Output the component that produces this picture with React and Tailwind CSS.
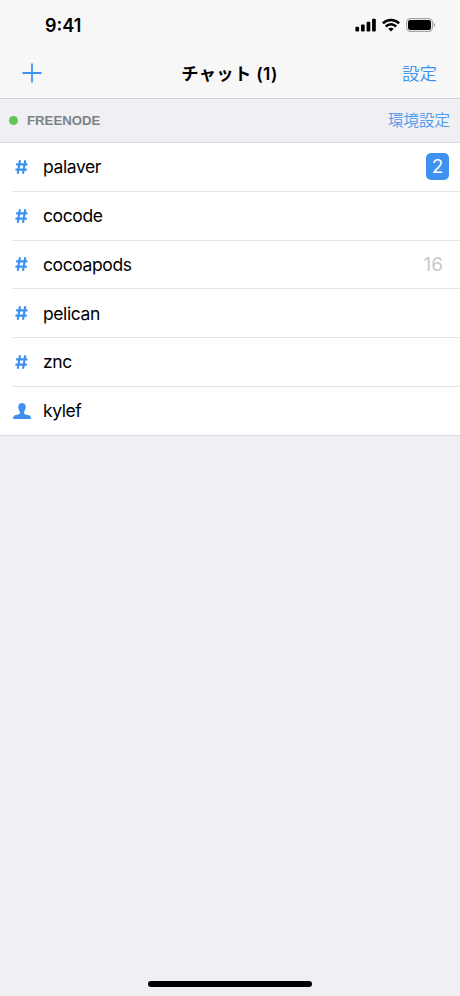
const channels = [
  { name: "palaver", unread: 2, highlight: true },
  { name: "cocode" },
  { name: "cocoapods", unread: 16 },
  { name: "pelican" },
  { name: "znc" },
  { name: "kylef", isUser: true },
];

const HashIcon = () => (
  <svg width="13" height="14" viewBox="0 0 13 14" fill="none" stroke="#3d92f0" strokeWidth="2.1">
    <path d="M5 0.2 L2.7 13.8 M10.3 0.2 L8 13.8 M1.1 4.4 H12.5 M0.4 9.6 H11.8" />
  </svg>
);

const UserIcon = () => (
  <svg width="18" height="16" viewBox="0 0 18 16" fill="#3d92f0">
    <path d="M9 0 C6.6 0 5.3 1.4 5.4 3.7 C4.9 4 5 5.3 5.7 5.8 C5.9 7.2 6.4 8.1 6.9 8.7 V10.4 C6.2 11.4 3.2 11.7 1.5 12.6 C0.4 13.2 0.1 14.3 0 16 H18 C17.9 14.3 17.6 13.2 16.5 12.6 C14.8 11.7 11.8 11.4 11.1 10.4 V8.7 C11.6 8.1 12.1 7.2 12.3 5.8 C13 5.3 13.1 4 12.6 3.7 C12.7 1.4 11.4 0 9 0 Z" />
  </svg>
);

const StatusBar = () => (
  <div className="flex h-[50px] items-center justify-between pl-[45px] pr-[24px]">
    <span className="mt-[2px] text-[18px] font-semibold leading-none">9:41</span>
    <div className="flex items-center">
      {/* Signal */}
      <svg width="22" height="14" viewBox="0 0 22 14">
        <rect x="0.4" y="8.8" width="3.7" height="4.7" rx="1" />
        <rect x="6" y="6.6" width="3.7" height="6.9" rx="1" />
        <rect x="11.6" y="3.8" width="3.7" height="9.7" rx="1" />
        <rect x="17.1" y="0.7" width="3.7" height="12.8" rx="1" />
      </svg>
      {/* Wifi */}
      <svg className="ml-[5px]" width="18" height="14" viewBox="0 0 18 14" fill="none" stroke="#000" strokeWidth="2.5">
        <path d="M0.9 5.3 C5.5 0.8 12.5 0.8 17.1 5.3" />
        <path d="M3.8 8.5 C6.8 5.6 11.2 5.6 14.2 8.5" />
        <path d="M9 13.5 L6.3 10.8 C7.8 9.4 10.2 9.4 11.7 10.8 Z" fill="#000" stroke="none" />
      </svg>
      {/* Battery */}
      <svg className="ml-[6px]" width="30" height="14" viewBox="0 0 30 14">
        <rect x="0.6" y="0.6" width="25.8" height="12.8" rx="3.8" fill="none" stroke="#a5a5a7" strokeWidth="1.1" />
        <rect x="2" y="2" width="23" height="10" rx="2.2" />
        <path d="M27.6 4.8 C29.7 5.5 29.7 8.5 27.6 9.2 Z" fill="#a5a5a7" />
      </svg>
    </div>
  </div>
);

const NavBar = () => (
  <div className="grid h-[48px] grid-cols-3 items-center pl-[22px] pr-[23px]">
    <button className="-mt-[2px] justify-self-start">
      <svg width="20" height="20" viewBox="0 0 20 20" fill="none" stroke="#3d92f0" strokeWidth="1.8">
        <path d="M10 0.5 V19.5 M0.5 10 H19.5" />
      </svg>
    </button>
    <h1 className="justify-self-center whitespace-nowrap text-[17.3px] font-semibold tracking-[0.35px]">
      チャット (1)
    </h1>
    <button className="mt-px justify-self-end text-[17.5px] font-[350] text-[#3d92f0]">設定</button>
  </div>
);

const ChannelRow = ({ channel, last }) => (
  <li className={`flex pl-[12px] ${last ? "h-[48px]" : "h-[48.8px]"}`}>
    <div className={`flex flex-1 items-center border-[#e4e4e7] pr-[11px] ${last ? "" : "border-b"}`}>
      <span className="flex w-[19px] justify-center">
        {channel.isUser ? <UserIcon /> : <HashIcon />}
      </span>
      <span className="ml-[12px] mt-px flex-1 text-[17.5px] tracking-[-0.4px]">{channel.name}</span>
      {channel.highlight && (
        <span className="flex h-[27px] w-[23px] items-center justify-center rounded-[5px] bg-[#3d92f0] text-[19px] text-white">
          {channel.unread}
        </span>
      )}
      {channel.unread && !channel.highlight && (
        <span className="mr-[6px] mt-[2px] text-[19px] text-[#c9c9cb]">{channel.unread}</span>
      )}
    </div>
  </li>
);

const App = () => {
  return (
    <div className="flex h-[996px] w-[460px] flex-col overflow-hidden bg-[#efeff4] font-['Inter','Noto_Sans_CJK_JP',sans-serif] text-black">
      <header className="h-[99px] border-b border-[#d2d2d5] bg-[#f7f7f8]">
        <StatusBar />
        <NavBar />
      </header>

      <section>
        <div className="flex h-[44px] items-center border-b border-[#dcdce0] pl-[9px] pr-[10px]">
          <span className="h-[9px] w-[9px] rounded-full bg-[#62c554]" />
          <h2 className="ml-[9px] mt-px flex-1 font-['Liberation_Sans',sans-serif] text-[13.2px] font-bold text-[#7b8488]">
            FREENODE
          </h2>
          <button className="mt-px text-[15.5px] font-[350] text-[#4c98ea]">環境設定</button>
        </div>
        <ul className="border-b border-[#dcdce0] bg-white">
          {channels.map((channel, i) => (
            <ChannelRow key={channel.name} channel={channel} last={i === channels.length - 1} />
          ))}
        </ul>
      </section>

      {/* Home indicator */}
      <div className="mx-auto mb-[9px] mt-auto h-[6px] w-[164px] rounded-full bg-black" />
    </div>
  );
};

export default App;
